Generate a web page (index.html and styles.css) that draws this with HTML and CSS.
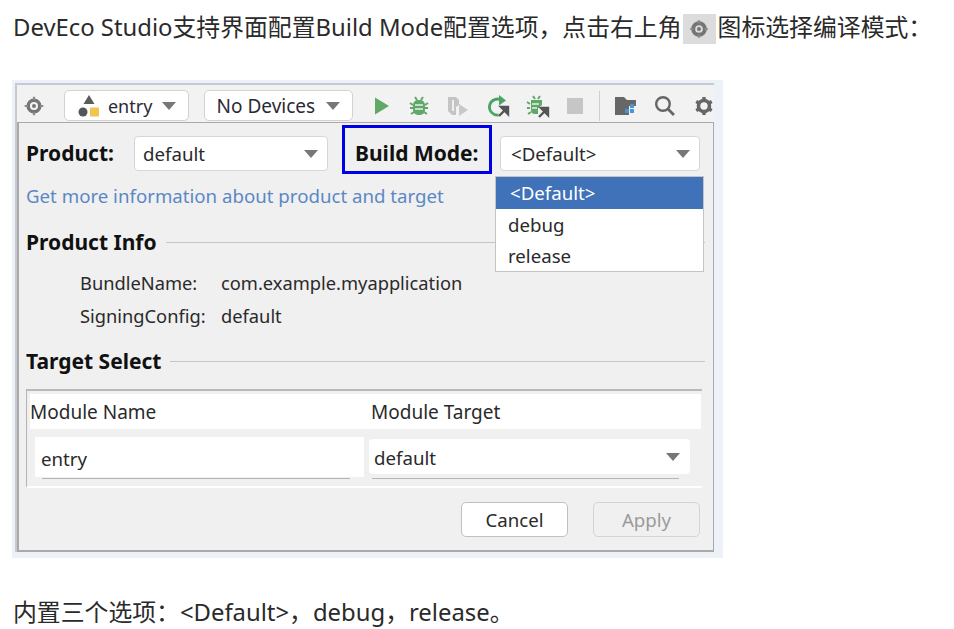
FILE: index.html
```html
<!DOCTYPE html>
<html lang="zh">
<head>
<meta charset="utf-8">
<title>Build Mode</title>
<link rel="stylesheet" href="styles.css">
</head>
<body>
<p class="para first">DevEco Studio支持界面配置Build Mode配置选项，点击右上角<span class="inline-icon"><svg width="22" height="22" viewBox="0 0 20 20"><circle cx="10" cy="10" r="5.300" fill="none" stroke="#757575" stroke-width="3.600"/><circle cx="10" cy="10" r="1.800" fill="#757575"/><path d="M10 2v3M10 15v3M2 10h3M15 10h3" stroke="#8a8a8a" stroke-width="2"/></svg></span>图标选择编译模式：</p>

<div class="shot">
  <div class="window">
    <div class="toolbar">
      <svg class="tool-target" width="22" height="22" viewBox="0 0 20 20"><circle cx="10" cy="10" r="5.300" fill="none" stroke="#757575" stroke-width="3.200"/><circle cx="10" cy="10" r="1.800" fill="#757575"/><path d="M10 1.500v3M10 15.500v3M1.500 10h3M15.500 10h3" stroke="#8a8a8a" stroke-width="2"/></svg>
      <div class="tool-btn entry-btn">
        <svg width="24" height="24" viewBox="0 0 24 24"><path d="M12 1l5.500 9h-11z" fill="#5c5c5c"/><circle cx="6" cy="18" r="4.500" fill="#555"/><rect x="13" y="13.500" width="9" height="9" fill="#f2c553"/></svg>
        <span>entry</span><i class="caret"></i>
      </div>
      <div class="tool-btn devices-btn"><span>No Devices</span><i class="caret"></i></div>
      <div class="tool-icons">
        <svg class="ico" width="18" height="20" viewBox="0 0 18 20"><path d="M2 1.500l14 8.500-14 8.500z" fill="#5fa868"/></svg>
        <svg class="ico" width="22" height="22" viewBox="0 0 22 22"><g stroke="#5fa868" stroke-width="2" fill="none"><path d="M7 2l2 3M15 2l-2 3M2 8l3 2M20 8l-3 2M2 13h3M20 13h-3M3 19l3-2M19 19l-3-2"/></g><rect x="5" y="5" width="12" height="15" rx="5" fill="#5fa868"/><path d="M7 10h8M7 14h8" stroke="#e9f0e9" stroke-width="1.600"/></svg>
        <svg class="ico" width="24" height="22" viewBox="0 0 24 22"><path d="M2 2h8l3 3v5l-3 2v8H6l-4-4z" fill="#c4c4c4"/><path d="M7 5v11" stroke="#eee" stroke-width="2"/><path d="M13 9l9 6-9 6z" fill="#c9c9c9"/></svg>
        <svg class="ico" width="24" height="24" viewBox="0 0 24 24"><path d="M16 6.500A8 8 0 1 0 12.500 21" fill="none" stroke="#4aa564" stroke-width="2.800"/><path d="M13 1l7 5.500-7 5z" fill="#4aa564"/><path d="M13 22l8-8M15 13h7v7z" stroke="#555" stroke-width="2.400" fill="#555"/></svg>
        <svg class="ico" width="24" height="24" viewBox="0 0 24 24"><g stroke="#5fa868" stroke-width="2" fill="none"><path d="M7 2l2 3M14 2l-2 3M1 8l3 2M1 14h3M2 20l3-2"/></g><path d="M5 6h11v5l-4 3v6H9a4 4 0 0 1-4-4z" fill="#5fa868"/><path d="M6 10h7M6 14h5" stroke="#e9f0e9" stroke-width="1.600"/><path d="M13 23l8-8M15 14h7v7z" stroke="#555" stroke-width="2.400" fill="#555"/></svg>
        <svg class="ico" width="16" height="16" viewBox="0 0 16 16"><rect width="16" height="16" fill="#c6c6c6"/></svg>
      </div>
      <i class="tool-sep"></i>
      <svg class="ico" width="24" height="20" viewBox="0 0 24 20"><path d="M1 1h9l3 3h9v6h-7v9H1z" fill="#676767"/><rect x="16" y="8" width="4" height="4" fill="#4a94d4"/><rect x="11" y="13" width="4" height="4" fill="#4a94d4"/><rect x="16" y="13" width="4" height="4" fill="#4a94d4"/></svg>
      <svg class="ico search" width="22" height="22" viewBox="0 0 22 22"><circle cx="9" cy="9" r="6.800" fill="none" stroke="#666" stroke-width="2.400"/><path d="M14 14l6 6" stroke="#666" stroke-width="2.800"/></svg>
      <svg class="ico cog" width="20" height="20" viewBox="0 0 20 20"><circle cx="10" cy="10" r="5.500" fill="none" stroke="#666" stroke-width="3.600"/><path d="M10 1v4M10 15v4M2.200 5.500l3.500 2M14.300 12.500l3.500 2M2.200 14.500l3.500-2M14.300 7.500l3.500-2" stroke="#666" stroke-width="3.400"/></svg>
    </div>

    <div class="panel">
      <div class="top-row">
        <b class="label product-label">Product:</b>
        <div class="select product-select"><span>default</span><i class="caret"></i></div>
        <div class="mode-box"><b class="label">Build Mode:</b></div>
        <div class="select mode-select"><span>&lt;Default&gt;</span><i class="caret"></i></div>
      </div>
      <ul class="menu">
        <li class="active">&lt;Default&gt;</li>
        <li>debug</li>
        <li>release</li>
      </ul>
      <div class="link">Get more information about product and target</div>
      <div class="section info-title"><b>Product Info</b><i class="rule"></i></div>
      <dl class="info">
        <dt>BundleName:</dt><dd>com.example.myapplication</dd>
        <dt>SigningConfig:</dt><dd>default</dd>
      </dl>
      <div class="section target-title"><b>Target Select</b><i class="rule"></i></div>
      <div class="table">
        <div class="thead"><span class="col-a">Module Name</span><span>Module Target</span></div>
        <div class="tbody">
          <div class="cell cell-a">entry</div>
          <div class="cell cell-b"><span>default</span><i class="caret"></i></div>
        </div>
      </div>
      <div class="actions">
        <div class="btn">Cancel</div>
        <div class="btn disabled">Apply</div>
      </div>
    </div>
  </div>
</div>

<p class="para last">内置三个选项：&lt;Default&gt;，debug，release。</p>
</body>
</html>
```

FILE: styles.css
```css
* { box-sizing: border-box; }
html, body { margin: 0; padding: 0; background: #fff; overflow: hidden; }
body { width: 954px; height: 629px; font-family: "Noto Sans", "Noto Sans CJK SC", sans-serif; color: #222; }

.para { margin: 0; padding-left: 13px; font-size: 23.850px; line-height: 30px; color: #2a2a2a; white-space: nowrap; }
.first { padding-top: 12px; display: flex; align-items: flex-start; }
.last { margin-top: 39px; }
.inline-icon { display: inline-flex; align-items: center; justify-content: center; width: 33px; height: 30px; background: #dcdcdc; margin: 2px 2px 0 1px; }

.shot { margin: 36px 0 0 12px; width: 711px; height: 478px; background: #edf1f8; padding: 3px 9px 6px 3px; }
.window { height: 100%; border-top: 2px solid #c6cad2; border-left: 2px solid #c6c9cf; background: #f2f2f2; display: flex; flex-direction: column; }

.toolbar { height: 37px; flex: none; display: flex; align-items: center; padding-left: 6px; padding-top: 4px; }
.tool-btn { height: 31px; background: #fff; border: 1px solid #d2d2d2; border-radius: 5px; display: flex; align-items: center; font-size: 19px; color: #2a2a36; }
.entry-btn { width: 125px; margin-left: 19px; padding-left: 12px; gap: 7px; font-size: 18px; }
.devices-btn { width: 150px; margin-left: 15px; padding-left: 12px; }
.caret { display: block; flex: none; width: 0; height: 0; border-left: 7px solid transparent; border-right: 7px solid transparent; border-top: 8px solid #777; }
.entry-btn .caret { margin-left: 3px; }
.devices-btn .caret { margin-left: 11px; }
.tool-icons { display: flex; align-items: center; margin-left: 20px; }
.tool-icons .ico:nth-child(2) { margin-left: 17px; }
.tool-icons .ico:nth-child(3) { margin-left: 16px; }
.tool-icons .ico:nth-child(4) { margin-left: 16px; }
.tool-icons .ico:nth-child(5) { margin-left: 16px; }
.tool-icons .ico:nth-child(6) { margin-left: 17px; }
.tool-sep { display: block; width: 1px; height: 30px; background: #cfcfcf; margin: 0 14px 0 16px; }
.search { margin-left: 16px; }
.cog { margin-left: 18px; }

.panel { position: relative; flex: 1; border: 1px solid #a9a9a9; border-left-width: 2px; border-bottom-width: 2px; background: #f0f0f0; padding: 0 13px 0 7px; font-size: 18.670px; color: #2a2a2a; }
.top-row { display: flex; align-items: flex-start; height: 52px; }
.label { font-size: 21px; font-weight: 700; color: #111; }
.product-label { width: 108px; margin-top: 16px; }
.select { height: 35px; margin-top: 13px; background: #fff; border: 1px solid #d6d6d6; border-radius: 4px; display: flex; align-items: center; justify-content: space-between; padding: 0 9px 0 8px; }
.product-select { width: 194px; }
.mode-box { width: 150px; height: 49px; margin-top: 2px; margin-left: 14px; border: 3px solid #0000e6; display: flex; align-items: center; padding-left: 10px; padding-top: 7px; }
.mode-box .label { white-space: nowrap; }
.mode-select { width: 200px; margin-left: 8px; padding-left: 10px; }

.menu { position: absolute; left: 476px; top: 53px; width: 209px; height: 96px; margin: 0; padding: 0; list-style: none; background: #fff; border: 1px solid #c4c4c4; z-index: 2; }
.menu li { height: 31.500px; line-height: 31px; padding-left: 12px; }
.menu .active { background: #3f72b8; color: #fff; padding-left: 14px; }

.link { color: #5b88c4; margin-top: 8px; line-height: 26px; }
.section { display: flex; align-items: center; }
.section b { font-size: 21px; color: #111; }
.rule { display: block; flex: 1; height: 1px; background: #c6c6c6; margin-left: 9px; margin-right: -5px; }
.info-title { margin-top: 18px; height: 30px; }
.target-title { margin-top: 17px; height: 30px; }
.info { display: grid; grid-template-columns: 141px 1fr; margin: 13px 0 0 54px; row-gap: 7px; line-height: 26px; font-size: 18.300px; }
.info dt, .info dd { margin: 0; }

.table { margin-top: 13px; width: 676px; height: 99px; border-top: 2px solid #b9b9b9; border-left: 1px solid #b4b4b4; border-bottom: 2px solid #fff; background: #f0f0f0; padding-top: 3px; }
.thead { display: flex; align-items: center; height: 35px; margin-left: 3px; background: #fff; margin-right: 1px; font-size: 19px; }
.col-a { width: 341px; }
.tbody { display: flex; align-items: flex-start; margin-top: 8px; }
.cell { height: 40px; position: relative; display: flex; align-items: center; background: #fff; }
.cell::after { content: ""; position: absolute; bottom: -2px; height: 1px; background: #b5b5b5; }
.cell-a { width: 329px; margin-left: 8px; padding-left: 6px; padding-top: 2px; }
.cell-a::after { left: 7px; right: 14px; }
.cell-b { width: 321px; height: 35px; margin-top: 2px; margin-left: 5px; padding: 1px 10px 0 5px; justify-content: space-between; border-radius: 4px; }
.cell-b::after { left: 3px; right: 11px; bottom: -5px; }

.actions { display: flex; justify-content: flex-end; gap: 25px; margin-top: 14px; }
.btn { width: 107px; height: 35px; background: #fff; border: 1px solid #c0c0c0; border-radius: 5px; display: flex; align-items: center; justify-content: center; }
.disabled { background: #f0f0f0; color: #9a9a9a; border-color: #d4d4d4; }
```
